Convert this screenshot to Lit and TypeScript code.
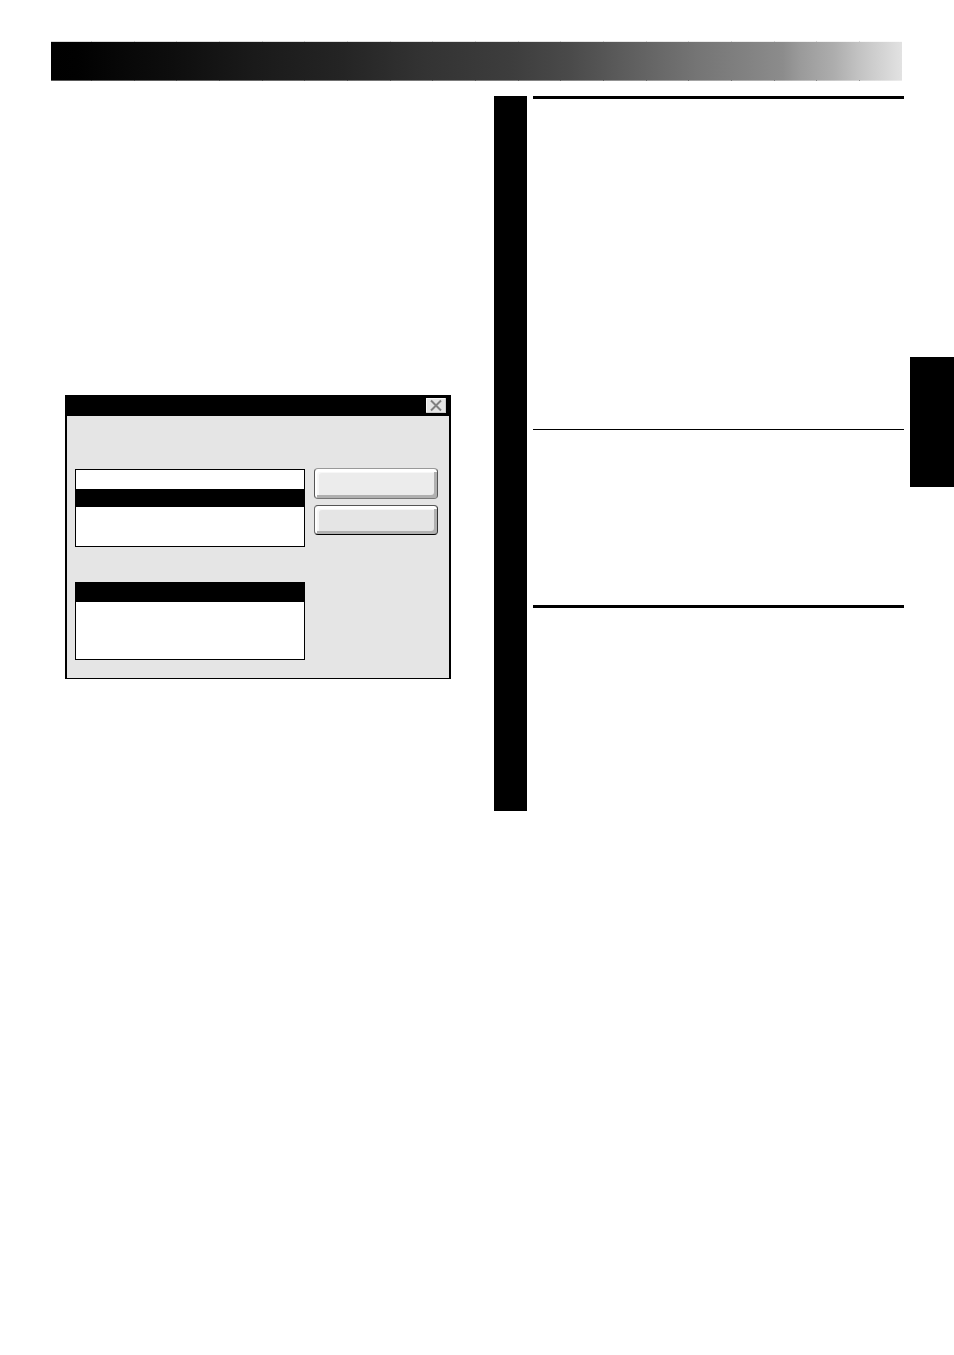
import { LitElement, html, css } from "lit";
import { customElement } from "lit/decorators.js";

@customElement("app-root")
export class AppRoot extends LitElement {
  static styles = css`
    :host {
      display: block;
      box-sizing: border-box;
      padding: 41px 0 40px 51px;
      background: #fff;
      font-family: "Liberation Sans", Arial, sans-serif;
    }
    *,
    *::before,
    *::after {
      box-sizing: border-box;
    }
    .banner {
      height: 40px;
      margin-right: 52px;
      display: flex;
      flex-direction: column;
      justify-content: space-between;
      background: linear-gradient(
        90deg,
        #000 0%,
        #010101 3%,
        #080808 9%,
        #0d0d0d 14%,
        #151515 20%,
        #1a1a1a 24%,
        #242424 34%,
        #333 44%,
        #3d3d3d 54%,
        #4a4a4a 61%,
        #646464 70%,
        #757575 76%,
        #808080 81%,
        #8c8c8c 86%,
        #9a9a9a 88%,
        #adadad 92%,
        #c3c3c3 95%,
        #e2e2e2 100%
      );
    }
    .ticks {
      height: 1px;
      padding: 0 42px 0 40px;
      display: flex;
      justify-content: space-between;
      background: rgba(255, 255, 255, 0.85);
    }
    .ticks.low {
      background: rgba(255, 255, 255, 0.35);
    }
    .ticks i {
      width: 1px;
      background: rgba(0, 0, 0, 0.12);
    }
    .ticks.low i {
      background: rgba(0, 0, 0, 0.3);
    }
    .page {
      display: grid;
      grid-template-columns: minmax(0, 443fr) 33px minmax(0, 383fr) 44px;
      margin-top: 15px;
    }
    .left {
      padding-top: 299px;
      margin: 0 43px 0 14px;
    }
    .bar {
      background: #000;
      height: 715px;
    }
    .right {
      margin: 0 6px;
    }
    hr {
      border: 0;
      margin: 0;
      height: 3px;
      background: #000;
    }
    hr.thin {
      height: 1px;
      margin: 330px 0 175px;
    }
    .tab {
      height: 130px;
      margin-top: 261px;
      background: #000;
    }
    .dialog {
      border: solid #000;
      border-width: 0 2px 1px;
      background: #e5e5e5;
    }
    .title {
      height: 21px;
      padding: 3px 3px 0;
      background: #000;
      display: flex;
      justify-content: flex-end;
    }
    button {
      display: block;
      padding: 0;
      margin: 0;
    }
    .close {
      width: 20px;
      height: 15px;
      border: 0;
      background: #e5e5e5;
      box-shadow: inset -1px -1px #ccc, inset 1px 1px #f8f8f8;
    }
    .close svg {
      display: block;
      margin: 0 auto;
    }
    .body {
      display: flex;
      gap: 9px;
      padding: 53px 11px 18px 8px;
    }
    .lists {
      flex: 230;
      min-width: 0;
      display: grid;
      gap: 35px;
    }
    select {
      display: block;
      width: 100%;
      height: 78px;
      margin: 0;
      padding: 0;
      border: 1px solid #000;
      border-radius: 0;
      background: #fff;
      overflow: hidden;
      outline: 0;
      appearance: none;
      scrollbar-width: none;
    }
    option {
      height: 19px;
      min-height: 0;
      padding: 0;
    }
    option:checked {
      background: linear-gradient(#000, #000);
    }
    .upper option:checked {
      height: 18px;
    }
    .actions {
      flex: 124;
      min-width: 0;
      display: flex;
      flex-direction: column;
      gap: 6px;
      margin-top: -1px;
    }
    .action {
      height: 31px;
      border: 1px solid #555;
      border-top-color: #999;
      border-bottom-color: #777;
      border-radius: 4px;
      background: #ececec;
      box-shadow: inset 2px 3px #fff, inset -3px -3px #b0b0b0, inset 4px 4px #f7f7f7;
    }
    .action.cancel {
      height: 30px;
      border-color: #555 #333 #000 #666;
      background: #e5e5e5;
    }
  `;

  private ticks(kind: string) {
    return html`<div class="ticks ${kind}">${Array.from({ length: 19 }, () => html`<i></i>`)}</div>`;
  }

  render() {
    return html`
      <header class="banner">${this.ticks("high")}${this.ticks("low")}</header>
      <main class="page">
        <div class="left">
          <section class="dialog" role="dialog" aria-label="Dialog">
            <div class="title">
              <button class="close" type="button" aria-label="Close">
                <svg width="14" height="15" viewBox="0 0 14 15">
                  <path d="M2 2.5L12 12.5M12 2.5L2 12.5" fill="none" stroke="#808080" stroke-width="2" />
                </svg>
              </button>
            </div>
            <div class="body">
              <div class="lists">
                <select class="upper" size="4" aria-label="First list">
                  <option></option>
                  <option selected></option>
                  <option></option>
                  <option></option>
                </select>
                <select size="4" aria-label="Second list">
                  <option selected></option>
                  <option></option>
                  <option></option>
                  <option></option>
                </select>
              </div>
              <div class="actions">
                <button class="action" type="button" aria-label="OK"></button>
                <button class="action cancel" type="button" aria-label="Cancel"></button>
              </div>
            </div>
          </section>
        </div>
        <div class="bar"></div>
        <div class="right">
          <hr />
          <hr class="thin" />
          <hr />
        </div>
        <div class="tab"></div>
      </main>
    `;
  }
}
